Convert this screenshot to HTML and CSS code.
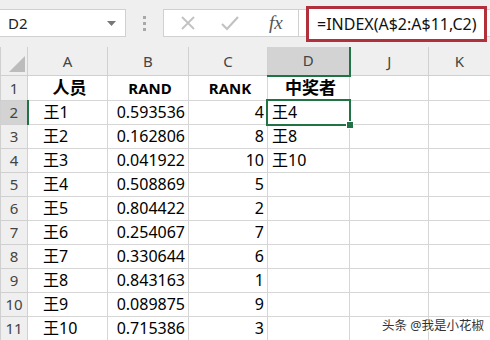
FILE: index.html
```html
<!doctype html>
<html>
    <head>
        <meta http-equiv="Content-Type" content="text/html; charset=utf-8">
        <link rel="stylesheet" href="styles.css">
    </head>
    <body>
        <div class="bar">
            <div class="namebox">
                <span>D2</span>
                <svg class="drop" width="9" height="5" viewBox="0 0 9 5"><path d="M0 0h9L4.5 5z" fill="#777"/></svg>
            </div>
            <div class="grip"><i></i><i></i><i></i></div>
            <div class="fbtns">
                <svg width="16" height="16" viewBox="0 0 16 16"><path d="M2 2L14 14M14 2L2 14" stroke="#c2c2c2" stroke-width="1.8" fill="none"/></svg>
                <svg width="20" height="16" viewBox="0 0 20 16"><path d="M2 9l5 5L18 2" stroke="#c2c2c2" stroke-width="2.2" fill="none"/></svg>
                <span class="fx">fx</span>
            </div>
            <div class="formula">
                <div class="redbox">=INDEX(A$2:A$11,C2)</div>
            </div>
        </div>
        <table class="sheet">
            <colgroup>
                <col style="width:27px"><col style="width:80px"><col style="width:81px"><col style="width:79px"><col style="width:82px"><col style="width:79px"><col>
            </colgroup>
            <tr class="colhead">
                <th class="corner"><svg width="16" height="16" viewBox="0 0 16 16"><path d="M16 0V16H0z" fill="#bcbcbc"/></svg></th>
                <th>A</th><th>B</th><th>C</th><th class="on">D</th><th>J</th><th>K</th>
            </tr>
            <tr class="top">
                <th>1</th><td class="c cjk">人员</td><td class="c">RAND</td><td class="c">RANK</td><td class="c cjk">中奖者</td><td></td><td></td>
            </tr>
            <tr>
                <th class="on">2</th><td class="n">王1</td><td class="r">0.593536</td><td class="r">4</td><td class="sel">王4</td><td></td><td></td>
            </tr>
            <tr>
                <th>3</th><td class="n">王2</td><td class="r">0.162806</td><td class="r">8</td><td>王8</td><td></td><td></td>
            </tr>
            <tr>
                <th>4</th><td class="n">王3</td><td class="r">0.041922</td><td class="r">10</td><td>王10</td><td></td><td></td>
            </tr>
            <tr>
                <th>5</th><td class="n">王4</td><td class="r">0.508869</td><td class="r">5</td><td></td><td></td><td></td>
            </tr>
            <tr>
                <th>6</th><td class="n">王5</td><td class="r">0.804422</td><td class="r">2</td><td></td><td></td><td></td>
            </tr>
            <tr>
                <th>7</th><td class="n">王6</td><td class="r">0.254067</td><td class="r">7</td><td></td><td></td><td></td>
            </tr>
            <tr>
                <th>8</th><td class="n">王7</td><td class="r">0.330644</td><td class="r">6</td><td></td><td></td><td></td>
            </tr>
            <tr>
                <th>9</th><td class="n">王8</td><td class="r">0.843163</td><td class="r">1</td><td></td><td></td><td></td>
            </tr>
            <tr>
                <th>10</th><td class="n">王9</td><td class="r">0.089875</td><td class="r">9</td><td></td><td></td><td></td>
            </tr>
            <tr>
                <th>11</th><td class="n">王10</td><td class="r">0.715386</td><td class="r">3</td><td></td><td></td><td></td>
            </tr>
        </table>
        <div class="mark">头条 @我是小花椒</div>
    </body>
</html>
```

FILE: styles.css
```css
html, body{
    margin: 0;
    padding: 0;
    width: 490px;
    height: 340px;
    overflow: hidden;
    background: #fff;
    font-family: "Noto Sans", "Noto Sans CJK SC", sans-serif;
    position: relative;
}
.bar{
    height: 47px;
    box-sizing: border-box;
    padding-top: 9px;
    background: #efefef;
    display: flex;
    align-items: flex-start;
}
.namebox{
    width: 127px;
    height: 28px;
    box-sizing: border-box;
    margin-left: -1px;
    background: #fff;
    border: 1px solid #d0d0d0;
    display: flex;
    align-items: center;
    padding-left: 8px;
    padding-right: 9px;
    font-size: 15px;
    color: #222;
}
.namebox span{
    flex: 1;
}
.grip{
    width: 37px;
    height: 28px;
    display: flex;
    flex-direction: column;
    align-items: center;
    justify-content: center;
    gap: 3px;
}
.grip i{
    width: 3px;
    height: 3px;
    background: #a8a8a8;
}
.fbtns{
    width: 136px;
    height: 28px;
    box-sizing: border-box;
    background: #fff;
    border: 1px solid #d0d0d0;
    display: flex;
    align-items: center;
    padding-left: 16px;
    gap: 24px;
}
.fx{
    font-family: "Liberation Serif", serif;
    font-style: italic;
    font-size: 19px;
    color: #555;
    margin-left: 5px;
}
.formula{
    flex: 1;
    height: 28px;
    background: #fff;
    border-top: 1px solid #d0d0d0;
    border-bottom: 1px solid #d0d0d0;
    box-sizing: border-box;
}
.redbox{
    margin: -4px 3px 0 7px;
    height: 36px;
    box-sizing: border-box;
    border: 3px solid #b2303c;
    padding-left: 8px;
    display: flex;
    align-items: center;
    font-size: 16px;
    color: #111;
    background: #fff;
}
.sheet{
    border-collapse: collapse;
    table-layout: fixed;
    width: 491px;
}
.sheet th, .sheet td{
    height: 23px;
    padding: 0;
    border: 1px solid #d6d6d6;
    font-size: 16px;
    font-weight: normal;
    white-space: nowrap;
    overflow: hidden;
    color: #000;
    line-height: 22px;
}
.sheet tr th:first-child{
    background: #efefef;
    color: #444;
    text-align: center;
    border-color: #d0d0d0;
    font-size: 15px;
}
.colhead th{
    height: 25px;
    background: #efefef;
    color: #444;
    border-color: #d0d0d0;
    border-top: 0;
    vertical-align: middle;
    padding-bottom: 1px;
    font-size: 15px;
}
.colhead .corner{
    padding: 0 2px 3px 0;
    vertical-align: bottom;
}
.corner svg{
    display: block;
    margin-left: auto;
}
.colhead th.on{
    background: #d3d3d3;
    border-bottom: 2px solid #217346;
}
.sheet tr th.on{
    background: #d3d3d3;
    border-right: 2px solid #217346;
}
.sheet td.c{
    text-align: center;
    font-weight: bold;
    font-size: 15px;
}
.sheet td.cjk{
    font-size: 17px;
}
.sheet td.n{
    padding-left: 15px;
}
.sheet td.r{
    text-align: right;
    padding-right: 3px;
}
.sheet td{
    padding-left: 4px;
}
.sheet td.sel{
    position: relative;
    overflow: visible;
}
.sel::after{
    content: "";
    position: absolute;
    left: -2px;
    top: -2px;
    right: -2px;
    bottom: -2px;
    border: 2px solid #217346;
}
.sel::before{
    content: "";
    position: absolute;
    right: -5px;
    bottom: -5px;
    width: 6px;
    height: 6px;
    background: #217346;
    border: 1px solid #fff;
    z-index: 1;
}
.mark{
    position: absolute;
    left: 382px;
    top: 315px;
    font-size: 12.5px;
    white-space: nowrap;
    color: #333;
    text-shadow: 0 0 2px #fff, 0 0 2px #fff, 1px 1px 0 #fff;
}
```
